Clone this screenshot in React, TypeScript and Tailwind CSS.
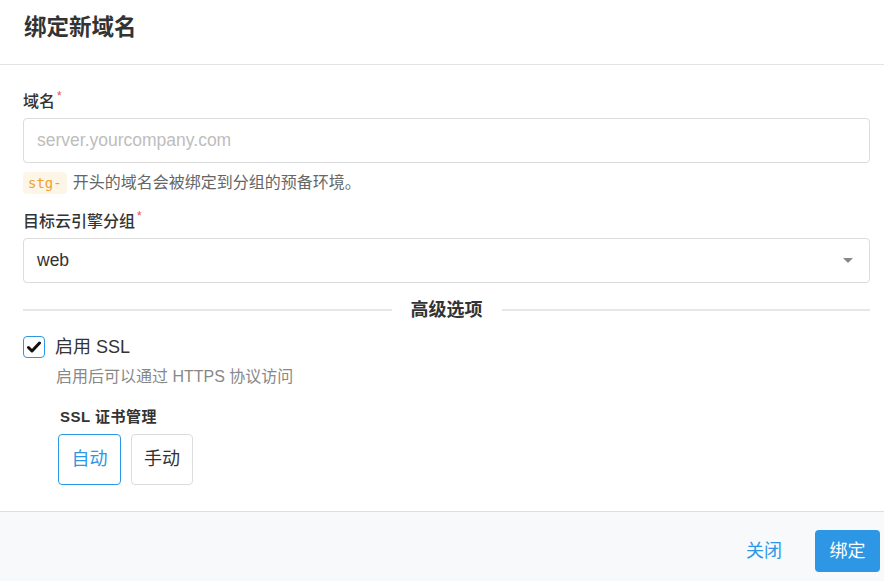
import { useState } from 'react';

const FONT = { fontFamily: '"Liberation Sans", "Noto Sans CJK SC", sans-serif' };

function Label({ children }: { children: string }) {
  return (
    <div className="text-[16px] font-medium text-[#333] leading-none flex items-start">
      {children}
      <span className="text-[#e94b4b] text-[12px] ml-[2px] -mt-[4px]">*</span>
    </div>
  );
}

export default function App() {
  const [sslOn, setSslOn] = useState(true);
  const [mode, setMode] = useState<'auto' | 'manual'>('auto');

  return (
    <div className="w-[884px] h-[581px] bg-white flex flex-col overflow-hidden text-[#333]" style={FONT}>
      {/* Header */}
      <div className="h-[65px] border-b border-[#e3e3e3] flex items-center px-[24px] pb-[8px] shrink-0">
        <h2 className="text-[22.5px] font-bold text-[#333]">绑定新域名</h2>
      </div>

      {/* Body */}
      <div className="flex-1 pl-[23px] pr-[14px] pt-[29px] flex flex-col">
        <Label>域名</Label>
        <input
          className="mt-[8px] h-[45px] w-full border border-[#dcdcdc] rounded-[4px] px-[13px] text-[17.5px] outline-none placeholder:text-[#bdbdbd]"
          placeholder="server.yourcompany.com"
        />
        <div className="mt-[8px] flex items-center text-[16px] text-[#666]">
          <code
            className="bg-[#fdf6e6] text-[#f0a030] text-[14px] px-[5px] h-[22px] leading-[22px] rounded-[4px] mr-[6px]"
            style={{ fontFamily: '"DejaVu Sans Mono", monospace' }}
          >
            stg-
          </code>
          开头的域名会被绑定到分组的预备环境。
        </div>

        <div className="mt-[19px]">
          <Label>目标云引擎分组</Label>
        </div>
        <div className="mt-[8px] h-[45px] w-full border border-[#dcdcdc] rounded-[4px] px-[13px] flex items-center justify-between">
          <span className="text-[17.5px] text-[#333]">web</span>
          <svg width="10" height="5" viewBox="0 0 10 5" className="mr-[3px]">
            <path d="M0 0 L10 0 L5 5 Z" fill="#888" />
          </svg>
        </div>

        {/* Divider */}
        <div className="mt-[18px] flex items-center">
          <div className="flex-1 h-[2px] bg-[#e6e6e6]" />
          <span className="px-[19px] text-[18px] font-bold text-[#333] leading-none">高级选项</span>
          <div className="flex-1 h-[2px] bg-[#e6e6e6]" />
        </div>

        {/* SSL */}
        <label className="mt-[17px] flex items-center cursor-pointer">
          <span
            onClick={() => setSslOn(v => !v)}
            className="w-[22px] h-[22px] border border-[#2d97e6] rounded-[4px] flex items-center justify-center bg-white"
          >
            {sslOn && (
              <svg width="14" height="12" viewBox="0 0 14 12">
                <path d="M1.5 6.5 L5 10 L12.5 2" fill="none" stroke="#111" strokeWidth="3" strokeLinecap="round" strokeLinejoin="round" />
              </svg>
            )}
          </span>
          <span className="ml-[10px] text-[18px] text-[#333] leading-[22px]">启用 SSL</span>
        </label>
        <div className="mt-[7px] ml-[33px] text-[16px] leading-[24px] text-[#888]">启用后可以通过 HTTPS 协议访问</div>

        <div className="mt-[18px] ml-[37px] text-[15px] leading-[20px] font-bold text-[#333] tracking-[0.5px]">SSL 证书管理</div>
        <div className="mt-[7px] ml-[35px] flex gap-[10px]">
          <button
            onClick={() => setMode('auto')}
            className={`w-[63px] h-[51px] rounded-[4px] border text-[18px] ${mode === 'auto' ? 'border-[#2d97e6] text-[#2d97e6]' : 'border-[#dcdcdc] text-[#333]'}`}
          >
            自动
          </button>
          <button
            onClick={() => setMode('manual')}
            className={`w-[62px] h-[51px] rounded-[4px] border text-[18px] ${mode === 'manual' ? 'border-[#2d97e6] text-[#2d97e6]' : 'border-[#dcdcdc] text-[#333]'}`}
          >
            手动
          </button>
        </div>
      </div>

      {/* Footer */}
      <div className="h-[70px] border-t border-[#dedede] bg-[#f8f9fb] flex items-center justify-end pr-[4px] pt-[9px] shrink-0">
        <button className="text-[18px] text-[#2d97e6] mr-[33px]">关闭</button>
        <button className="w-[65px] h-[42px] rounded-[4px] bg-[#2d97e6] text-white text-[18px]">绑定</button>
      </div>
    </div>
  );
}
